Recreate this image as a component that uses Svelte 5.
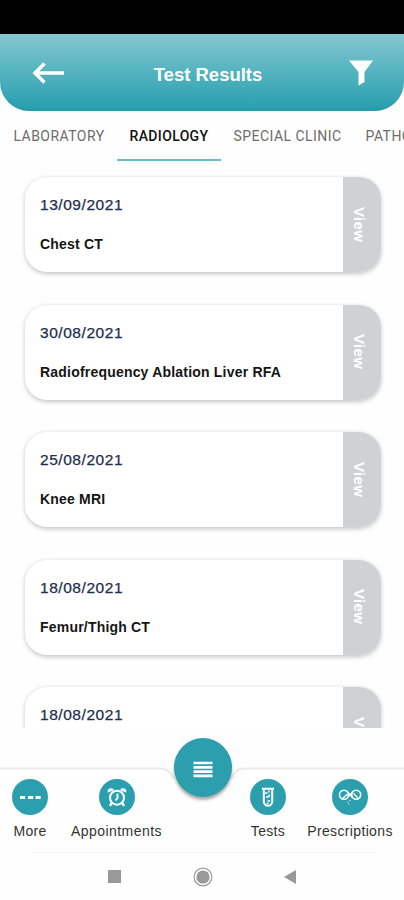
<script lang="ts">
	const tabs = [
		{ name: 'LABORATORY', width: 116 },
		{ name: 'RADIOLOGY', width: 104 },
		{ name: 'SPECIAL CLINIC', width: 133 },
		{ name: 'PATHOLOGY', width: 106 },
	];

	const results = [
		{ date: '13/09/2021', title: 'Chest CT' },
		{ date: '30/08/2021', title: 'Radiofrequency Ablation Liver RFA' },
		{ date: '25/08/2021', title: 'Knee MRI' },
		{ date: '18/08/2021', title: 'Femur/Thigh CT' },
		{ date: '18/08/2021', title: '' },
	];

	let activeTab = $state('RADIOLOGY');
</script>

<div class="screen">
	<div class="status-bar"></div>

	<header>
		<button class="icon-btn" aria-label="Back">
			<svg width="32" height="22" viewBox="0 0 32 22" fill="none" stroke="#fff" stroke-width="3.5">
				<path d="M12.5 1.5 3 11l9.5 9.5M3 11H32" />
			</svg>
		</button>
		<h1>Test Results</h1>
		<button class="icon-btn" aria-label="Filter">
			<svg width="24" height="26" viewBox="0 0 24 26" fill="#fff">
				<path d="M0 0.5H24L15.5 12V22L9.5 25.5V12Z" />
			</svg>
		</button>
	</header>

	<nav class="tabs">
		{#each tabs as tab}
			<button
				class="tab"
				class:active={activeTab === tab.name}
				style="width: {tab.width}px"
				onclick={() => (activeTab = tab.name)}
			>
				{tab.name}
			</button>
		{/each}
	</nav>

	<main>
		{#each results as result}
			<article class="card">
				<div class="info">
					<div class="date">{result.date}</div>
					<div class="title">{result.title}</div>
				</div>
				<button class="view"><span>View</span></button>
			</article>
		{/each}
	</main>

	<footer>
		<svg class="outline" width="404" height="60" viewBox="0 0 404 60" fill="none">
			<path d="M0 10.5H160C168 10.5 171 15 174 21M404 10.5H245C237 10.5 234 15 231 21" stroke="#e9eaeb" stroke-width="2.2" />
		</svg>
		<div class="bottom-nav">
			<button class="nav-item">
				<svg width="36" height="36" viewBox="0 0 36 36">
					<circle cx="18" cy="18" r="18" fill="#2b9fae" />
					<path d="M8 18.5h5.2M16 18.5h5.2M23.5 18.5h5.2" stroke="#fff" stroke-width="3.2" />
				</svg>
				<span class="more">More</span>
			</button>
			<button class="nav-item">
				<svg width="36" height="36" viewBox="0 0 36 36" fill="none" stroke="#fff">
					<circle cx="18" cy="18" r="18" fill="#2b9fae" stroke="none" />
					<circle cx="18" cy="18.7" r="7" stroke-width="2" />
					<path d="M18.5 14.8V19L16.5 21.5" stroke-width="2" />
					<path d="M10.2 13.2C9.6 10.8 11.8 9.8 14 11.2M25.8 13.2C26.4 10.8 24.2 9.8 22 11.2" stroke-width="2.8" />
					<path d="m12.8 24-1.9 2.8M23.2 24l1.9 2.8" stroke-width="2.4" />
				</svg>
				<span class="appointments">Appointments</span>
			</button>
			<div></div>
			<button class="nav-item">
				<svg width="36" height="36" viewBox="0 0 36 36" fill="none" stroke="#fff">
					<circle cx="18" cy="18" r="18" fill="#2b9fae" stroke="none" />
					<path d="M12 9.7H24M13.8 10V22.5a4.2 4.2 0 0 0 8.4 0V10" stroke-width="2" />
					<path d="M15 14h2.5M16 18h2.5M17.5 22h2.5M16.5 24.5h2M19 15.5v2.5M19 11.5v2" stroke-width="1.5" />
				</svg>
				<span class="tests">Tests</span>
			</button>
			<button class="nav-item">
				<svg width="36" height="36" viewBox="0 0 36 36" fill="none" stroke="#fff">
					<circle cx="18" cy="18" r="18" fill="#2b9fae" stroke="none" />
					<circle cx="12" cy="15.7" r="4.5" stroke-width="1.6" />
					<circle cx="24.2" cy="15.7" r="4.5" stroke-width="1.6" />
					<path d="M15 12.5 20.5 18.5M15.5 18.5 21 12.5M10.5 19.5 15.5 15M21.5 14.5 26 19" stroke-width="1.3" />
					<path d="M15 23h1.5M17.5 21.5H19M16 25h1.5" stroke-width="1.2" opacity=".65" />
				</svg>
				<span class="prescriptions">Prescriptions</span>
			</button>
		</div>
		<button class="fab" aria-label="Menu">
			<svg width="20" height="17" viewBox="0 0 20 17">
				<path d="M0.5 2h19M0.5 6.3h19M0.5 10.6h19M0.5 14.9h19" stroke="#fff" stroke-width="2.7" />
			</svg>
		</button>
	</footer>

	<div class="system-nav">
		<svg width="13" height="13" viewBox="0 0 13 13"><rect width="13" height="13" fill="#999" /></svg>
		<svg width="20" height="20" viewBox="0 0 20 20">
			<circle cx="10" cy="10" r="8.9" fill="none" stroke="#999" stroke-width="1.2" />
			<circle cx="10" cy="10" r="6.6" fill="#999" />
		</svg>
		<svg width="12" height="14" viewBox="0 0 12 14"><path d="M0 7 12 0V14Z" fill="#999" /></svg>
	</div>
</div>

<style>
	:global(body) {
		margin: 0;
		background: #fff;
	}

	button {
		border: 0;
		padding: 0;
		background: none;
		font: inherit;
		letter-spacing: inherit;
		color: inherit;
	}

	svg {
		display: block;
	}

	.screen {
		width: 404px;
		height: 900px;
		display: flex;
		flex-direction: column;
		overflow: hidden;
		background: #fefefe;
		font-family: 'Liberation Sans', Arial, sans-serif;
	}

	.status-bar {
		flex: none;
		height: 34px;
		background: #000;
	}

	header {
		flex: none;
		height: 77px;
		box-sizing: border-box;
		padding: 0 31px 0 32px;
		display: grid;
		grid-template-columns: 32px 1fr 24px;
		border-radius: 0 0 29px 29px;
		background: linear-gradient(#85c7cf, #55b4c0 48%, #2b9fae 96%, #2197a9);
	}

	header .icon-btn:first-child {
		padding-top: 1px;
	}

	.icon-btn {
		display: flex;
		align-items: center;
	}

	h1 {
		margin: 0;
		padding: 4px 0 0 3px;
		align-self: center;
		text-align: center;
		color: #fff;
		font-size: 18.5px;
		letter-spacing: 0;
		line-height: 22px;
	}

	.tabs {
		flex: none;
		display: flex;
		height: 49.5px;
		padding-left: 1px;
		overflow: hidden;
		font-family: Roboto, sans-serif;
		font-size: 14px;
		letter-spacing: 0.45px;
	}

	.tab {
		flex: none;
		box-sizing: border-box;
		padding-top: 3px;
		border-bottom: 2px solid transparent;
		color: #6c6c6c;
		white-space: nowrap;
	}

	.tab.active {
		color: #111;
		font-weight: 500;
		letter-spacing: 0.35px;
		border-color: #65bdc5;
	}

	main {
		flex: none;
		height: 567.5px;
		box-sizing: border-box;
		padding: 16.5px 23px 0 24.5px;
		display: flex;
		flex-direction: column;
		gap: 32.5px;
		overflow: hidden;
	}

	.card {
		flex: none;
		display: flex;
		height: 95px;
		border-radius: 22px;
		overflow: hidden;
		background: #fff;
		box-shadow: 0 1.5px 4px rgba(0, 0, 0, 0.22);
	}

	.info {
		flex: 1;
		padding: 19px 0 0 15.5px;
	}

	.date {
		color: #202e4d;
		font-size: 15.5px;
		line-height: 18px;
		letter-spacing: 0.55px;
		-webkit-text-stroke: 0.25px #202e4d;
	}

	.title {
		margin-top: 22px;
		color: #151515;
		font-size: 14px;
		font-weight: bold;
		line-height: 17px;
		letter-spacing: 0.2px;
	}

	.view {
		width: 38px;
		display: flex;
		align-items: center;
		justify-content: center;
		background: #ced2d5;
		color: #fff;
		font-size: 15px;
		font-weight: bold;
		letter-spacing: 0.3px;
	}

	.view span {
		writing-mode: vertical-rl;
		padding-right: 5px;
	}

	footer {
		flex: none;
		position: relative;
		height: 124px;
		box-sizing: border-box;
		padding-top: 51px;
	}

	.outline {
		position: absolute;
		top: 30px;
		left: 0;
	}

	.bottom-nav {
		display: grid;
		grid-template-columns: 60px 113px 59px 72px 92px;
	}

	.nav-item {
		display: flex;
		flex-direction: column;
		align-items: center;
		gap: 8px;
		color: #333;
		font-size: 14px;
		line-height: 17px;
	}

	.more {
		letter-spacing: 0.25px;
	}

	.appointments {
		letter-spacing: 0.45px;
	}

	.tests {
		letter-spacing: 0.35px;
	}

	.prescriptions {
		letter-spacing: 0.35px;
	}

	.fab {
		position: absolute;
		top: 10px;
		left: 173.5px;
		width: 58px;
		height: 59px;
		display: flex;
		align-items: center;
		justify-content: center;
		padding-top: 4px;
		border-radius: 50%;
		background: #2b9fae;
		box-shadow: 0 3px 3px rgba(0, 0, 0, 0.32);
	}

	.system-nav {
		flex: 1;
		margin: 0 24px 0 28px;
		padding: 0 84px 0 80px;
		display: flex;
		align-items: center;
		justify-content: space-between;
		border-top: 1px solid #f6f6f6;
	}
</style>
